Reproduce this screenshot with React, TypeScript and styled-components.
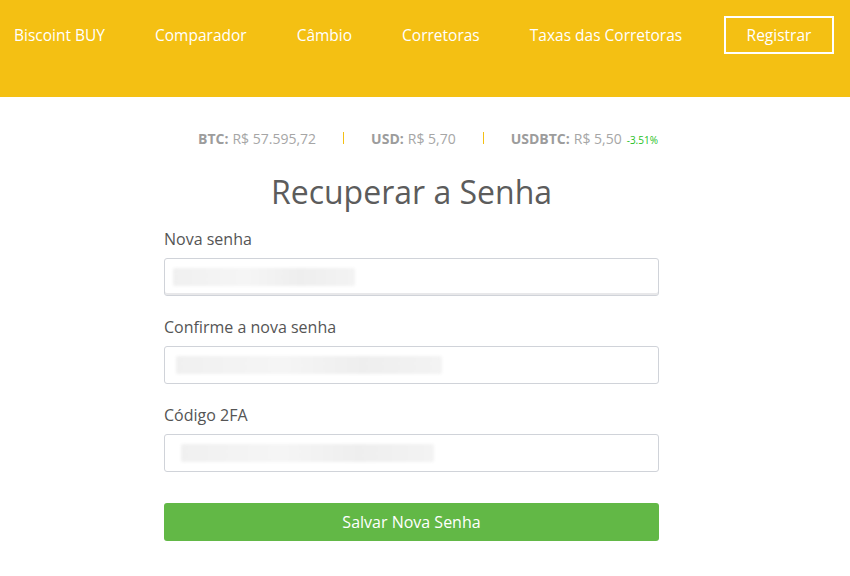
import React from "react";
import styled, { createGlobalStyle } from "styled-components";

const Global = createGlobalStyle`
  html, body { margin: 0; padding: 0; background: #fff; }
  body { font-family: "Open Sans", "Liberation Sans", sans-serif; }
  * { box-sizing: border-box; }
`;

const Header = styled.header`
  height: 97px;
  background: #f4c013;
  display: flex;
  align-items: flex-start;
  padding: 16px 16px 0 14px;
`;

const Nav = styled.nav`
  display: flex;
  align-items: center;
  height: 38px;
  gap: 50px;
`;

const NavLink = styled.a`
  color: #fff;
  font-size: 15.5px;
  text-decoration: none;
  line-height: 22px;
  white-space: nowrap;
`;

const RegisterButton = styled.a`
  margin-left: auto;
  width: 110px;
  height: 38px;
  border: 2px solid #fff;
  color: #fff;
  font-size: 15.5px;
  display: flex;
  align-items: center;
  justify-content: center;
  text-decoration: none;
`;

const Ticker = styled.div`
  display: flex;
  justify-content: center;
  align-items: center;
  margin-top: 31px;
  padding-left: 6px;
  height: 20px;
  font-size: 14px;
  color: #a6a6a6;
`;

const TickerItem = styled.span`
  display: flex;
  align-items: baseline;
  white-space: nowrap;
`;

const TickerLabel = styled.b`
  font-weight: 700;
  color: #9c9c9c;
  margin-right: 4px;
`;

const Change = styled.span`
  font-size: 10px;
  color: #1fbf1f;
  margin-left: 5px;
`;

const Divider = styled.span`
  width: 1px;
  height: 12px;
  background: #f4c013;
  margin: 0 27px;
`;

const Form = styled.form`
  width: 495px;
  margin: 0 0 0 164px;
  display: flex;
  flex-direction: column;
`;

const Title = styled.h1`
  margin: 26px 0 19px;
  font-size: 32px;
  font-weight: 400;
  line-height: 35px;
  color: #5c5c5c;
  text-align: center;
`;

const Group = styled.div`
  display: flex;
  flex-direction: column;
  margin-bottom: 20px;
`;

const Label = styled.label`
  font-size: 16px;
  line-height: 22px;
  color: #555;
  margin-bottom: 8px;
`;

const Field = styled.div<{ $underline?: boolean }>`
  height: 38px;
  border: 1px solid #d0d3d9;
  border-radius: 3px;
  background: #fff;
  display: flex;
  align-items: center;
  padding-left: 6px;
  box-shadow: ${(p) => (p.$underline ? "inset 0 -2px 0 #e8e8ea" : "none")};
`;

const Blur = styled.span`
  display: block;
  height: 18px;
  background: linear-gradient(90deg, #f0f0f0, #f5f5f5 40%, #eeeeee 70%, #f3f3f3);
  filter: blur(1.5px);
  border-radius: 2px;
`;

const Submit = styled.button`
  margin-top: 11px;
  height: 38px;
  width: 100%;
  border: none;
  border-radius: 3px;
  background: #62b846;
  color: #fff;
  font-family: inherit;
  font-size: 16px;
`;

const fields = [
  { label: "Nova senha", blurLeft: 2, blurWidth: 182, underline: true },
  { label: "Confirme a nova senha", blurLeft: 5, blurWidth: 266 },
  { label: "Código 2FA", blurLeft: 10, blurWidth: 253 },
];

export default function App() {
  return (
    <>
      <Global />
      <Header>
        <Nav>
          <NavLink href="#">Biscoint BUY</NavLink>
          <NavLink href="#">Comparador</NavLink>
          <NavLink href="#">Câmbio</NavLink>
          <NavLink href="#">Corretoras</NavLink>
          <NavLink href="#">Taxas das Corretoras</NavLink>
        </Nav>
        <RegisterButton href="#">Registrar</RegisterButton>
      </Header>
      <Ticker>
        <TickerItem>
          <TickerLabel>BTC:</TickerLabel>R$ 57.595,72
        </TickerItem>
        <Divider />
        <TickerItem>
          <TickerLabel>USD:</TickerLabel>R$ 5,70
        </TickerItem>
        <Divider />
        <TickerItem>
          <TickerLabel>USDBTC:</TickerLabel>R$ 5,50
          <Change>-3.51%</Change>
        </TickerItem>
      </Ticker>
      <Form onSubmit={(e) => e.preventDefault()}>
        <Title>Recuperar a Senha</Title>
        {fields.map((f) => (
          <Group key={f.label}>
            <Label>{f.label}</Label>
            <Field $underline={f.underline}>
              <Blur style={{ marginLeft: f.blurLeft, width: f.blurWidth }} />
            </Field>
          </Group>
        ))}
        <Submit type="submit">Salvar Nova Senha</Submit>
      </Form>
    </>
  );
}
